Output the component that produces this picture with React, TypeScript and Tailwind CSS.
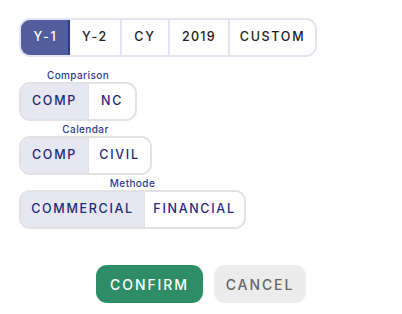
import React from "react";

const font = { fontFamily: "Inter, 'Noto Sans', sans-serif" };

function Seg({ label, items }: { label: string; items: { t: string; w: string; active?: boolean }[] }) {
  return (
    <div className="flex flex-col items-center">
      <div className="h-[14px] text-[10px] font-medium leading-[14px] tracking-[0.4px] text-[#2d3a8c]">{label}</div>
      <div className="flex h-[39px] overflow-hidden rounded-[11px] border-2 border-[#e2e2e6]">
        {items.map((it, i) => (
          <div
            key={i}
            className={`flex items-center justify-center text-[12.5px] font-medium tracking-[1.7px] text-[#1f2a7a] ${it.w} ${
              it.active ? "bg-[#e6e7f0]" : "bg-white"
            } ${i > 0 ? "border-l border-[#e2e2e6]" : ""}`}
          >
            {it.t}
          </div>
        ))}
      </div>
    </div>
  );
}

export default function App() {
  return (
    <div className="h-[314px] w-[402px] bg-white" style={font}>
      <div className="flex flex-col items-start pl-[19px] pt-[18px]">
        <div className="flex h-[39px] overflow-hidden rounded-[11px] border-2 border-[#e3e6f2]">
          <div className="-my-[2px] -ml-[2px] flex w-[51px] items-center justify-center rounded-l-[11px] border-2 border-[#2f3b8c] bg-[#525d9e] pl-[2px] text-[12.5px] font-medium tracking-[1.7px] text-white">
            Y-1
          </div>
          <div className="flex w-[50px] items-center justify-center text-[12.5px] font-medium tracking-[1.7px] text-[#222]">Y-2</div>
          <div className="flex w-[48px] items-center justify-center border-l-2 border-[#e3e6f2] text-[12.5px] font-medium tracking-[1.7px] text-[#222]">CY</div>
          <div className="flex w-[60px] items-center justify-center border-l-2 border-[#e3e6f2] text-[12.5px] font-medium tracking-[1.3px] text-[#222]">2019</div>
          <div className="flex w-[87px] items-center justify-center border-l-2 border-[#e3e6f2] text-[12.5px] font-medium tracking-[1.7px] text-[#222]">CUSTOM</div>
        </div>
        <div className="mt-[11px]">
          <Seg label="Comparison" items={[{ t: "COMP", w: "w-[67px]", active: true }, { t: "NC", w: "w-[47px]" }]} />
        </div>
        <div className="mt-[1px]">
          <Seg label="Calendar" items={[{ t: "COMP", w: "w-[67px]", active: true }, { t: "CIVIL", w: "w-[62px]" }]} />
        </div>
        <div className="mt-[1px]">
          <Seg label="Methode" items={[{ t: "COMMERCIAL", w: "w-[123px]", active: true }, { t: "FINANCIAL", w: "w-[100px]" }]} />
        </div>
      </div>
      <div className="mt-[36px] flex justify-center gap-[11px]">
        <button className="h-[38px] w-[107px] rounded-[11px] bg-[#2e8c66] text-[14px] font-medium tracking-[1.9px] text-white">CONFIRM</button>
        <button className="h-[38px] w-[92px] rounded-[11px] bg-[#ececec] text-[14px] font-medium tracking-[1.9px] text-[#666]">CANCEL</button>
      </div>
    </div>
  );
}
